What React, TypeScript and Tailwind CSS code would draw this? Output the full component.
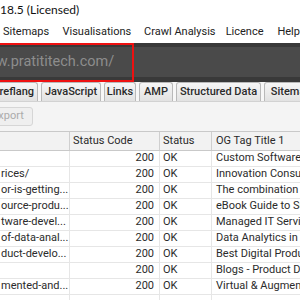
import React from 'react'

const ROWS: { url: string; title: string }[] = [
  { url: '', title: 'Custom Software Development' },
  { url: 'rices/', title: 'Innovation Consulting Services' },
  { url: 'or-is-getting...', title: 'The combination of' },
  { url: 'ource-produ...', title: 'eBook Guide to Successful' },
  { url: 'tware-devel...', title: 'Managed IT Services' },
  { url: 'of-data-anal...', title: 'Data Analytics in Business' },
  { url: 'duct-develo...', title: 'Best Digital Product' },
  { url: '', title: 'Blogs - Product Development' },
  { url: 'mented-and...', title: 'Virtual & Augmented Reality' },
  { url: '', title: '' },
]

const TABS: { label: string; w: string }[] = [
  { label: 'JavaScript', w: 'w-[60px]' },
  { label: 'Links', w: 'w-[32px]' },
  { label: 'AMP', w: 'w-[34px]' },
  { label: 'Structured Data', w: 'w-[85px]' },
  { label: 'Sitemaps', w: 'w-[60px]' },
]

export default function App() {
  return (
    <div className="relative w-[300px] h-[300px] overflow-hidden bg-white text-[#222] font-['Roboto',sans-serif]">
      {/* window title */}
      <div className="h-[22px] flex items-center font-['Lato',sans-serif] text-[12px] text-[#111] pb-[3px] whitespace-nowrap">
        18.5 (Licensed)
      </div>

      {/* menu bar */}
      <div className="h-[21px] flex items-center text-[11px] text-[#222] whitespace-nowrap">
        <div className="w-[65px] pl-[3px]">Sitemaps</div>
        <div className="w-[85px]">Visualisations</div>
        <div className="w-[85px]">Crawl Analysis</div>
        <div className="w-[54px]">Licence</div>
        <div>Help</div>
      </div>

      {/* url bar */}
      <div className="h-[39px] bg-[#393939] pt-[4px] pb-[5px]">
        <div className="h-[30px] bg-[#4a4a4a] flex items-center overflow-hidden whitespace-nowrap">
          <span className="ml-[-25px] text-[14.5px] text-[#8d8d8d]">www.pratititech.com/</span>
        </div>
      </div>
      <div className="absolute left-[-3px] top-[43px] w-[137px] h-[39px] border-2 border-[#ee1111]" />

      {/* tabs */}
      <div className="h-[19px] flex items-end gap-[3px] bg-[#f7f7f7] whitespace-nowrap text-[11px] font-medium text-[#2a2a2a]">
        <div className="w-[38px] h-[19px] flex items-center justify-end pr-[3px] border border-l-0 border-b-0 border-[#b9b9b9] rounded-tr-[3px] bg-gradient-to-b from-[#f6f6f6] to-[#e2e2e2]">
          reflang
        </div>
        {TABS.map(t => (
          <div
            key={t.label}
            className={`${t.w} h-[19px] shrink-0 flex items-center justify-center border border-b-0 border-[#b9b9b9] rounded-t-[3px] bg-gradient-to-b from-[#f6f6f6] to-[#e2e2e2]`}
          >
            {t.label}
          </div>
        ))}
      </div>

      {/* toolbar */}
      <div className="h-[30px] bg-[#f4f4f4] border-t border-[#d2d2d2] pt-[5px]">
        <div className="ml-[-17px] w-[50px] h-[19px] flex items-center pl-[8px] border border-[#d6d6d6] rounded-[3px] bg-[#efefef] text-[11px] text-[#ababab]">
          Export
        </div>
      </div>

      {/* table header */}
      <div className="h-[20px] flex border-t border-b border-[#c9c9c9] bg-[#f2f2f2] text-[11px] text-[#2a2a2a] whitespace-nowrap">
        <div className="w-[70px] shrink-0 border-r border-[#cfcfcf]" />
        <div className="w-[90px] shrink-0 border-r border-[#cfcfcf] flex items-center pl-[3px]">Status Code</div>
        <div className="w-[52px] shrink-0 border-r border-[#cfcfcf] flex items-center pl-[3px]">Status</div>
        <div className="flex-1 flex items-center pl-[4px]">OG Tag Title 1</div>
      </div>

      {/* rows */}
      <div className="text-[11px] text-[#2b2b2b] whitespace-nowrap">
        {ROWS.map((r, i) => (
          <div key={i} className="h-[16px] flex border-b border-[#e6e6e6]">
            <div className="w-[70px] shrink-0 border-r border-[#e6e6e6] flex items-center overflow-hidden pl-[1px]">{r.url}</div>
            <div className="w-[90px] shrink-0 border-r border-[#e6e6e6] flex items-center justify-end pr-[5px]">{r.title ? '200' : ''}</div>
            <div className="w-[52px] shrink-0 border-r border-[#e6e6e6] flex items-center pl-[3px]">{r.title ? 'OK' : ''}</div>
            <div className="flex-1 flex items-center pl-[4px] overflow-hidden">{r.title}</div>
          </div>
        ))}
      </div>
    </div>
  )
}
